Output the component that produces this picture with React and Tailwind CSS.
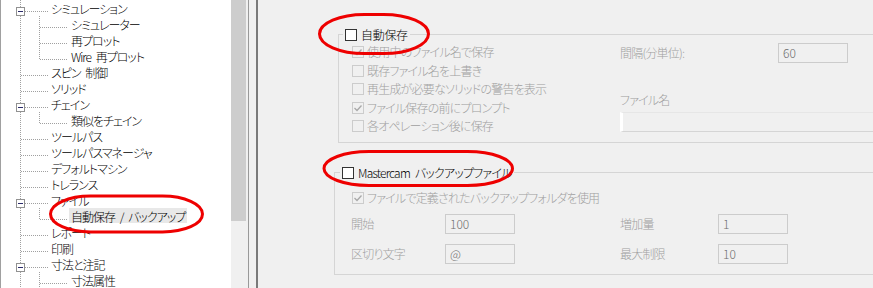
import React from "react";

const FONT = "font-['Noto_Sans_CJK_JP',sans-serif] [font-feature-settings:'palt'] text-[12px] font-light tracking-[-0.8px] [word-spacing:3px]";

const tree = [
  { l: 0, box: true, t: "シミュレーション" },
  { l: 1, t: "シミュレーター" },
  { l: 1, t: "再プロット" },
  { l: 1, t: "Wire 再プロット", last: true },
  { l: 0, t: "スピン 制御" },
  { l: 0, t: "ソリッド" },
  { l: 0, box: true, t: "チェイン" },
  { l: 1, t: "類似をチェイン", last: true },
  { l: 0, t: "ツールパス" },
  { l: 0, t: "ツールパスマネージャ" },
  { l: 0, t: "デフォルトマシン" },
  { l: 0, t: "トレランス" },
  { l: 0, box: true, t: "ファイル" },
  { l: 1, t: "自動保存 / バックアップ", last: true, sel: true },
  { l: 0, t: "レポート" },
  { l: 0, t: "印刷" },
  { l: 0, box: true, t: "寸法と注記" },
  { l: 1, t: "寸法属性" },
];

const DOT = { stroke: "#a0a0a0", strokeWidth: 1, strokeDasharray: "1 1", shapeRendering: "crispEdges" };

function Gutter({ item }) {
  const w = item.l === 0 ? 48 : 68;
  return (
    <svg width={w} height="16" className="shrink-0 block">
      <line x1="19.5" y1="0" x2="19.5" y2="16" {...DOT} />
      {item.l === 0 ? (
        <line x1={item.box ? 24 : 20} y1="11.5" x2="48" y2="11.5" {...DOT} />
      ) : (
        <>
          <line x1="38.5" y1="0" x2="38.5" y2={item.last ? 12 : 16} {...DOT} />
          <line x1="39" y1="11.5" x2="66" y2="11.5" {...DOT} />
        </>
      )}
      {item.box && (
        <>
          <rect x="15.5" y="7.5" width="8" height="8" fill="#ffffff" stroke="#919191" shapeRendering="crispEdges" />
          <line x1="17" y1="11.5" x2="22" y2="11.5" stroke="#2b2b6b" shapeRendering="crispEdges" />
        </>
      )}
    </svg>
  );
}

function Tree() {
  return (
    <div className="w-[231px] h-full bg-white border-l border-[#a0a0a0] flex flex-col overflow-hidden">
      {tree.map((it, i) => (
        <div key={i} className="h-[16px] flex items-start shrink-0">
          <Gutter item={it} />
          <span
            className={
              "px-[2px] h-[15px] leading-[17px] whitespace-pre text-black tracking-[-1px] " +
              (it.sel ? "bg-[#e8e8e8]" : "")
            }
          >
            {it.t}
          </span>
        </div>
      ))}
    </div>
  );
}

function Check({ checked, enabled }) {
  return (
    <span
      className={
        enabled
          ? "w-[12px] h-[12px] border border-[#333333] bg-white shrink-0 flex"
          : "w-[12px] h-[12px] border border-[#cccccc] bg-[#f0f0f0] shrink-0 flex"
      }
    >
      {checked && (
        <svg width="10" height="10" viewBox="0 0 10 10" className="block">
          <path d="M1.5 5 L4 7.5 L8.5 2.5" fill="none" stroke="#a8a8a8" strokeWidth="1.3" />
        </svg>
      )}
    </span>
  );
}

function Input({ value, w = "w-[70px]" }) {
  return (
    <div className={w + " h-[20px] border border-[#cccccc] bg-[#f0f0f0] pl-[4px] flex items-center text-[#6d6d6d] leading-[12px] tracking-normal shrink-0"}>
      {value}
    </div>
  );
}

function Row({ checked, children }) {
  return (
    <div className="h-[18.5px] flex items-center gap-[3px]">
      <Check checked={checked} />
      <span className="text-[#a0a0a0] whitespace-nowrap leading-[12px]">{children}</span>
    </div>
  );
}

export default function App() {
  return (
    <div className={"relative w-[873px] h-[288px] overflow-hidden bg-[#f0f0f0] flex " + FONT}>
      <Tree />
      {/* scrollbar */}
      <div className="w-[17px] h-full bg-[#f0f0f0] shrink-0">
        <div className="w-[15px] h-[221px] bg-[#cdcdcd]" />
      </div>
      <div className="w-px h-full bg-[#999999] shrink-0" />
      <div className="w-[7px] h-full shrink-0" />
      <div className="w-[2px] h-full bg-[#7a7a7a] shrink-0" />

      {/* right panel */}
      <div className="flex-1 flex flex-col min-w-0">
        <fieldset className="ml-[80px] mt-[28px] w-[600px] min-w-0 border border-[#d5d5d5] p-0 shrink-0">
          <legend className="ml-[4px] px-[2px] h-[13px] flex items-center gap-[4px] text-black leading-[12px]">
            <Check enabled />
            <span className="tracking-[-0.3px]">自動保存</span>
          </legend>
          <div className="h-[101px] flex pl-[13px]">
            <div className="w-[268px] pt-[2px] flex flex-col shrink-0">
              <Row checked>使用中のファイル名で保存</Row>
              <Row>既存ファイル名を上書き</Row>
              <Row>再生成が必要なソリッドの警告を表示</Row>
              <Row checked>ファイル保存の前にプロンプト</Row>
              <Row>各オペレーション後に保存</Row>
            </div>
            <div className="flex-1 pt-[2px] flex flex-col">
              <div className="h-[20px] flex items-center">
                <span className="w-[158px] text-[#a0a0a0] leading-[12px]">間隔(分単位):</span>
                <Input value="60" />
              </div>
              <div className="mt-[31px] h-[12px] leading-[12px] text-[#a0a0a0]">ファイル名</div>
              <div className="mt-[6px] h-[20px] border border-[#d5d5d5] border-t-[#e6e6e6] border-l-[3px] border-l-white bg-[#f0f0f0]" />
            </div>
          </div>
        </fieldset>

        <fieldset className="ml-[76px] mt-[23px] w-[600px] min-w-0 border border-[#d5d5d5] p-0 shrink-0">
          <legend className="ml-[5px] px-[2px] h-[13px] flex items-center gap-[4px] text-black leading-[12px]">
            <Check enabled />
            <span>Mastercam バックアップファイル</span>
          </legend>
          <div className="h-[95px] pl-[16px] pt-[10px] flex flex-col">
            <div className="ml-px">
              <Row checked>ファイルで定義されたバックアップフォルダを使用</Row>
            </div>
            <div className="mt-[6.5px] flex flex-col gap-[10px]">
              <div className="h-[20px] flex items-center">
                <span className="w-[94px] text-[#a0a0a0] leading-[12px]">開始</span>
                <Input value="100" />
                <span className="w-[105px]" />
                <span className="w-[98px] text-[#a0a0a0] leading-[12px]">増加量</span>
                <Input value="1" />
              </div>
              <div className="h-[20px] flex items-center">
                <span className="w-[94px] text-[#a0a0a0] leading-[12px]">区切り文字</span>
                <Input value="@" />
                <span className="w-[105px]" />
                <span className="w-[98px] text-[#a0a0a0] leading-[12px]">最大制限</span>
                <Input value="10" />
              </div>
            </div>
          </div>
        </fieldset>
      </div>

      {/* red annotation marks */}
      <svg className="absolute left-0 top-0 pointer-events-none" width="873" height="288">
        <rect x="319.5" y="14.5" width="109" height="39" rx="45" ry="19.5" fill="none" stroke="#ee0000" strokeWidth="3" />
        <rect x="324" y="151.5" width="188.5" height="34" rx="45" ry="17" fill="none" stroke="#ee0000" strokeWidth="3" />
        <rect x="50.5" y="196" width="152" height="36" rx="40" ry="18" fill="none" stroke="#ee0000" strokeWidth="3" />
      </svg>
    </div>
  );
}
